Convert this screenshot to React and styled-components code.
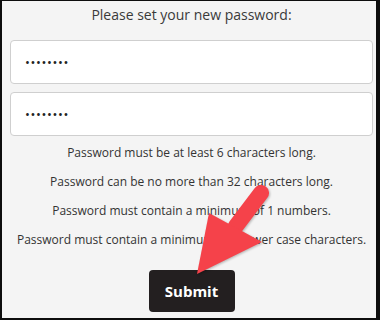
import React from "react";
import styled, { createGlobalStyle } from "styled-components";

const Global = createGlobalStyle`
  html, body { margin: 0; padding: 0; background: #ffffff; }
  * { box-sizing: border-box; }
`;

const Page = styled.div`
  position: relative;
  width: 380px;
  height: 320px;
`;

const Frame = styled.div`
  width: 380px;
  height: 320px;
  border-style: solid;
  border-color: #0d0d0d;
  border-width: 1px 4px 2px 2px;
  background: #f4f4f4;
  padding: 4px 3px 0 8px;
  display: flex;
  flex-direction: column;
  align-items: center;
  font-family: "Open Sans", "Liberation Sans", sans-serif;
  color: #333333;
`;

const Title = styled.div`
  font-size: 14px;
  line-height: 20px;
  color: #3a3a3a;
  text-align: center;
`;

const Field = styled.input`
  display: block;
  width: 363px;
  height: 44px;
  margin-top: ${(p) => p.$gap}px;
  padding: 0 14px;
  border: 1px solid #cfcfcf;
  border-radius: 4px;
  background: #ffffff;
  font-family: "Open Sans", "Liberation Sans", sans-serif;
  font-size: 13px;
  color: #222222;
  outline: none;
  letter-spacing: 0.6px;
`;

const Rules = styled.div`
  margin-top: 9px;
  display: flex;
  flex-direction: column;
  align-items: center;
  gap: 13px;
`;

const Rule = styled.p`
  margin: 0;
  font-size: 12px;
  line-height: 16px;
  color: #333333;
  text-align: center;
  white-space: nowrap;
`;

const SubmitButton = styled.button`
  margin-top: 22px;
  width: 86px;
  height: 42px;
  border: none;
  border-radius: 4px;
  background: #231f20;
  color: #ffffff;
  font-family: "Open Sans", "Liberation Sans", sans-serif;
  font-weight: 700;
  font-size: 15px;
  cursor: pointer;
`;

const Overlay = styled.svg`
  position: absolute;
  left: 0;
  top: 0;
  width: 380px;
  height: 320px;
  pointer-events: none;
  filter: drop-shadow(1px 1px 1px rgba(0, 0, 0, 0.25));
`;

const rules = [
  "Password must be at least 6 characters long.",
  "Password can be no more than 32 characters long.",
  "Password must contain a minimum of 1 numbers.",
  "Password must contain a minimum of 1 lower case characters.",
];

export default function App() {
  return (
    <Page>
      <Global />
      <Frame>
        <Title>Please set your new password:</Title>
        <Field type="password" defaultValue="abcdefgh" $gap={15} readOnly />
        <Field type="password" defaultValue="abcdefgh" $gap={8} readOnly />
        <Rules>
          {rules.map((r) => (
            <Rule key={r}>{r}</Rule>
          ))}
        </Rules>
        <SubmitButton>Submit</SubmitButton>
      </Frame>
      <Overlay viewBox="0 0 380 320">
        <line x1="236" y1="226" x2="261" y2="193" stroke="#f5424a" strokeWidth="16" strokeLinecap="round" />
        <polygon points="197,274 209,213 262,242" fill="#f5424a" />
      </Overlay>
    </Page>
  );
}
